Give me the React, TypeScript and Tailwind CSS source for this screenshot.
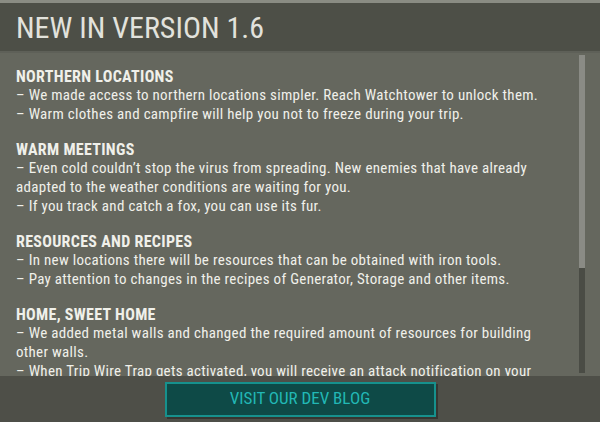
const SECTIONS: { title: string; lines: string[] }[] = [
  {
    title: 'NORTHERN LOCATIONS',
    lines: [
      '– We made access to northern locations simpler. Reach Watchtower to unlock them.',
      '– Warm clothes and campfire will help you not to freeze during your trip.',
    ],
  },
  {
    title: 'WARM MEETINGS',
    lines: [
      '– Even cold couldn’t stop the virus from spreading. New enemies that have already adapted to the weather conditions are waiting for you.',
      '– If you track and catch a fox, you can use its fur.',
    ],
  },
  {
    title: 'RESOURCES AND RECIPES',
    lines: [
      '– In new locations there will be resources that can be obtained with iron tools.',
      '– Pay attention to changes in the recipes of Generator, Storage and other items.',
    ],
  },
  {
    title: 'HOME, SWEET HOME',
    lines: [
      '– We added metal walls and changed the required amount of resources for building other walls.',
      '– When Trip Wire Trap gets activated, you will receive an attack notification on your screen.',
    ],
  },
];

export default function App() {
  return (
    <div
      className="w-[600px] h-[422px] flex flex-col bg-[#65675e] overflow-hidden"
      style={{ fontFamily: '"Roboto Condensed", Roboto, sans-serif' }}
    >
      {/* Header */}
      <div className="h-[3px] bg-[#8a8c83]" />
      <div className="h-[48px] bg-[#4d4f47] flex items-center px-4">
        <h1 className="text-[30px] leading-none text-[#e2e2dc] pt-[2px]">NEW IN VERSION 1.6</h1>
      </div>
      <div className="h-[2px] bg-[#5e6058]" />

      {/* Body */}
      <div className="flex-1 flex min-h-0">
        <div className="flex-1 min-w-0 overflow-hidden pl-4 pt-[14px]">
          <div className="w-[540px] flex flex-col gap-[16px]">
            {SECTIONS.map(s => (
              <div key={s.title} className="text-[15px] leading-[19px] text-[#f0f0ea] tracking-[0.02em]">
                <h2 className="font-bold text-[16px]">{s.title}</h2>
                {s.lines.map(l => (
                  <p key={l}>{l}</p>
                ))}
              </div>
            ))}
          </div>
        </div>
        <div className="w-[21px] flex flex-col pt-[2px] pb-[3px]">
          <div className="w-[6px] flex-1 flex flex-col">
            <div className="h-[213px] bg-[#8a8b85]" />
            <div className="flex-1 bg-[#4a4c45]" />
          </div>
        </div>
      </div>

      {/* Footer */}
      <div className="h-[46px] bg-[#4e4f48] flex items-center justify-center">
        <button className="w-[271px] h-[35px] bg-[#0e4a47] border-2 border-[#16918d] shadow-[2px_2px_0_rgba(30,30,25,0.5)] text-[17px] text-[#22b8b5]">
          VISIT OUR DEV BLOG
        </button>
      </div>
    </div>
  );
}
